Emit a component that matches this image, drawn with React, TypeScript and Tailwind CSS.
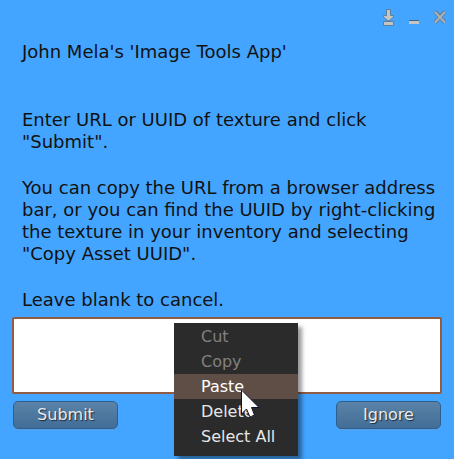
import type { ReactNode } from "react";

const menuItems = [
  { label: "Cut", disabled: true },
  { label: "Copy", disabled: true },
  { label: "Paste", active: true },
  { label: "Delete" },
  { label: "Select All" },
];

function WindowButton({ label, children }: { label: string; children: ReactNode }) {
  return (
    <button type="button" aria-label={label} className="block h-5 w-4">
      <svg viewBox="0 0 16 20" className="h-5 w-4">
        {children}
      </svg>
    </button>
  );
}

function DialogButton({ children }: { children: ReactNode }) {
  return (
    <button
      type="button"
      className="h-7 w-[105px] rounded-[5px] border border-[#2c5f8d] bg-linear-to-b from-[#5b83a9] to-[#426d96] text-[16px] leading-[26px] text-[#eaeaea] [text-shadow:1px_1px_1px_#1b2b3a] shadow-[0_1px_0_#5b9fe0]"
    >
      {children}
    </button>
  );
}

function ContextMenu() {
  return (
    <div
      role="menu"
      className="absolute top-[6px] left-[162px] z-10 w-[124px] bg-[#2b2b2b] pt-px pb-[7px] shadow-[4px_4px_4px_rgba(0,0,0,0.4)]"
    >
      {menuItems.map(({ label, disabled, active }) => (
        <button
          key={label}
          type="button"
          role="menuitem"
          disabled={disabled}
          className={`block h-[25px] w-full pl-[27px] text-left text-[16px] leading-[25px] ${
            disabled ? "text-[#808080]" : active ? "bg-[#5f4e46] text-white" : "text-[#e6e6e6]"
          }`}
        >
          {label}
        </button>
      ))}
      <svg viewBox="0 0 20 30" className="absolute top-[66px] left-[67px] h-[30px] w-5">
        <path d="M0.500 1V25L5.500 20L9 28L13.500 26L10.500 18.500H18Z" fill="#fff" stroke="#111327" />
      </svg>
    </div>
  );
}

export default function App() {
  return (
    <main className="min-h-screen bg-[#43a5ff] px-3 pt-[7px] font-['DejaVu_Sans',sans-serif] text-[#111]">
      <header className="-mr-1.5 flex justify-end gap-[10px]">
        <WindowButton label="Dock">
          <path d="M6.5 2.5H10.5V8.5H13.5V10L9.500 13.500H7.500L3.500 10V8.5H6.5Z" fill="#c4c4c4" stroke="#5a7f9f" />
          <path d="M3.500 14.500H13.500V18.500H3.500Z" fill="#c4c4c4" stroke="#5a7f9f" />
        </WindowButton>
        <WindowButton label="Minimize">
          <path d="M3 13.500H13" stroke="#32678f" />
          <path d="M3 15.500H13" stroke="#c4c4c4" strokeWidth="3" />
        </WindowButton>
        <WindowButton label="Close">
          <path d="M3 4.500L13 15.500M13 4.500L3 15.500" stroke="#5a7f9f" strokeWidth="4" />
          <path d="M3 5L13 15.500M13 5L3 15.500" stroke="#b0b0b0" strokeWidth="2" />
        </WindowButton>
      </header>
      <form onSubmit={(event) => event.preventDefault()}>
        <div className="pl-[10px] text-[18px] leading-[22px]">
          <h1 className="pt-[14px]">John Mela's 'Image Tools App'</h1>
          <p className="mt-[46px]">Enter URL or UUID of texture and click "Submit".</p>
          <p className="mt-6">
            You can copy the URL from a browser address bar, or you can find the UUID by right-clicking the texture in
            your inventory and selecting "Copy Asset UUID".
          </p>
          <p className="mt-6">Leave blank to cancel.</p>
        </div>
        <div className="relative mt-[6px]">
          <textarea
            aria-label="Texture URL or UUID"
            className="block h-[77px] w-full resize-none rounded-[2px] border-2 border-[#935c40] bg-white p-1 outline-none"
          />
          <ContextMenu />
        </div>
        <div className="mt-[7px] flex justify-between px-px">
          <DialogButton>Submit</DialogButton>
          <DialogButton>Ignore</DialogButton>
        </div>
      </form>
    </main>
  );
}
